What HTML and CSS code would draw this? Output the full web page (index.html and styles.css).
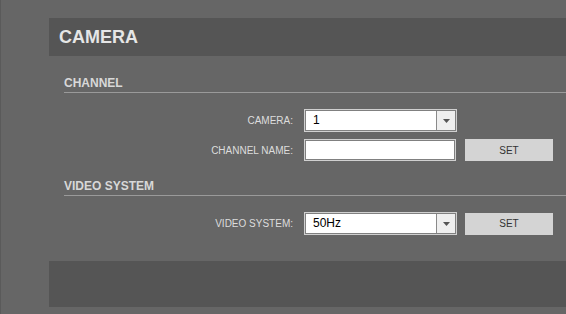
FILE: index.html
```html
<!DOCTYPE html>
<html lang="en">
<head>
  <meta charset="UTF-8">
  <meta name="viewport" content="width=device-width, initial-scale=1.0">
  <title>Camera</title>
  <link rel="stylesheet" href="styles.css">
</head>
<body>
  <div class="page">
    <div class="panel">
      <h1 class="title">CAMERA</h1>

      <div class="section">
        <h2 class="section-title">CHANNEL</h2>
        <div class="form">
          <label class="label">CAMERA:</label>
          <div class="select">
            <span class="select-value">1</span>
            <span class="select-arrow">
              <svg width="7" height="4" viewBox="0 0 7 4"><path d="M0 0 H7 L3.5 4 Z" fill="#555"/></svg>
            </span>
          </div>
          <span></span>

          <label class="label">CHANNEL NAME:</label>
          <input class="text-input" type="text" value="">
          <button class="btn">SET</button>
        </div>
      </div>

      <div class="section">
        <h2 class="section-title">VIDEO SYSTEM</h2>
        <div class="form">
          <label class="label">VIDEO SYSTEM:</label>
          <div class="select">
            <span class="select-value">50Hz</span>
            <span class="select-arrow">
              <svg width="7" height="4" viewBox="0 0 7 4"><path d="M0 0 H7 L3.5 4 Z" fill="#555"/></svg>
            </span>
          </div>
          <button class="btn">SET</button>
        </div>
      </div>

      <div class="footer"></div>
    </div>
  </div>
</body>
</html>
```

FILE: styles.css
```css
html, body {
  margin: 0;
  padding: 0;
  height: 100%;
}
body {
  background-color: #666666;
  font-family: "Liberation Sans", Arial, sans-serif;
}
.page {
  min-height: 100%;
  border-left: 1px solid #5a5a5a;
}
.panel {
  margin-left: 48px;
  padding-top: 18px;
}
.title {
  margin: 0;
  height: 38px;
  line-height: 38px;
  padding-left: 10px;
  background-color: #555555;
  color: #e6e6e6;
  font-size: 18px;
  font-weight: bold;
}
.section {
  padding-left: 15px;
}
.section-title {
  margin: 20px 0 0;
  padding-bottom: 2px;
  line-height: 14px;
  font-size: 12px;
  font-weight: bold;
  color: #d8d8d8;
  border-bottom: 1px solid #9a9a9a;
}
.section + .section .section-title {
  margin-top: 18px;
}
.form {
  display: grid;
  grid-template-columns: 232px 153px 88px;
  column-gap: 8px;
  row-gap: 7px;
  align-items: center;
  margin-top: 16px;
}
.label {
  margin-right: 3px;
  text-align: right;
  font-size: 10px;
  color: #dddddd;
}
.select {
  display: flex;
  box-sizing: border-box;
  height: 23px;
  border: 1px solid #d0d0d0;
  box-shadow: inset 0 0 0 1px #808080;
  background-color: #ffffff;
  padding: 1px;
}
.select-value {
  flex: 1;
  padding-left: 7px;
  line-height: 19px;
  font-size: 12px;
  color: #000000;
}
.select-arrow {
  display: flex;
  align-items: center;
  justify-content: center;
  width: 18px;
  border-left: 1px solid #8a8a8a;
  background-color: #efefef;
}
.text-input {
  box-sizing: border-box;
  width: 152px;
  height: 22px;
  margin: 0;
  border: 1px solid #d0d0d0;
  box-shadow: inset 0 0 0 1px #808080;
  background-color: #ffffff;
  outline: none;
  font-family: inherit;
  font-size: 12px;
}
.btn {
  height: 22px;
  border: none;
  background-color: #d4d4d4;
  color: #333333;
  font-family: inherit;
  font-size: 10px;
  cursor: pointer;
}
.footer {
  margin-top: 26px;
  height: 46px;
  background-color: #555555;
}
```
